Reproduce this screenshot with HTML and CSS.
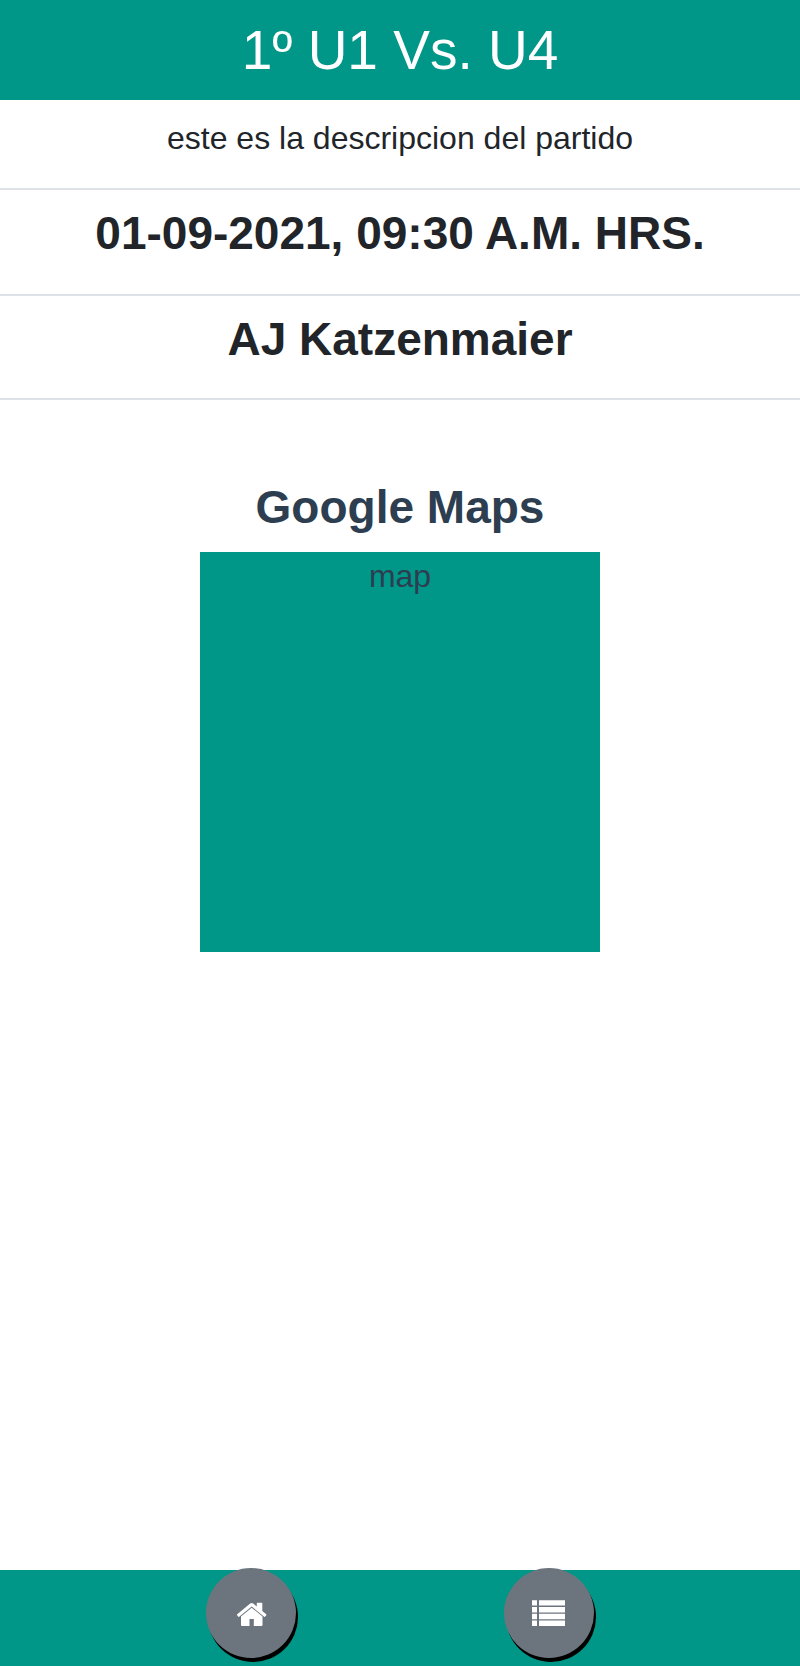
FILE: index.html
```html
<!DOCTYPE html>
<html lang="es">
<head>
<meta charset="utf-8">
<meta name="viewport" content="width=device-width, initial-scale=1">
<title>1º U1 Vs. U4</title>
<link rel="stylesheet" href="styles.css">
</head>
<body>
<header class="header"><h1 class="title">1º U1 Vs. U4</h1></header>
<main class="main">
  <section class="details">
    <p class="row description">este es la descripcion del partido</p>
    <h2 class="row heading">01-09-2021, 09:30 A.M. HRS.</h2>
    <h2 class="row heading">AJ Katzenmaier</h2>
  </section>
  <section class="location">
    <h2 class="heading">Google Maps</h2>
    <div class="map">map</div>
  </section>
</main>
<nav class="footer">
  <button class="round" type="button" aria-label="Inicio">
    <svg class="icon" viewBox="0 0 34 34" aria-hidden="true">
      <path d="M17.700 11.700 28.500 20.500v8.500q0 1-1 1h-7.700v-7h-4.300v7H8q-1 0-1-1v-8.500z"/>
      <path d="M3.300 18.300 16.200 7.500q1.500-1.200 3 0l3.600 3V7.300q0-.6.600-.6h4.300q.6 0 .6.600v7.800l3.900 3.200q.5.500.1 1l-1.100 1.300q-.5.500-1 .1L17.700 10.500 5.200 20.700q-.5.400-1-.1l-1.100-1.300q-.4-.5.200-1z"/>
    </svg>
  </button>
  <button class="round" type="button" aria-label="Lista">
    <svg class="icon" viewBox="0 0 34 34" aria-hidden="true">
      <path d="M0 4.200h5v5.400H0zM7 4.200h26v5.400H7zM0 11h5v5.400H0zM7 11h26v5.400H7zM0 17.800h5v5.400H0zM7 17.800h26v5.400H7zM0 24.600h5V30H0zM7 24.600h26V30H7z"/>
    </svg>
  </button>
</nav>
</body>
</html>
```

FILE: styles.css
```css
* {
  box-sizing: border-box;
}

body {
  margin: 0;
  min-height: 100vh;
  display: flex;
  flex-direction: column;
  background: #fff;
  color: #212529;
  font-family: "Liberation Sans", Arial, sans-serif;
  font-size: 32px;
  line-height: 48px;
  text-align: center;
}

.header {
  padding: 14px 16px;
  background: #009688;
  color: #fff;
}

.title {
  margin: 0;
  font-size: 55px;
  font-weight: 400;
  line-height: 72px;
}

.main {
  flex: 1;
}

.heading {
  margin: 0;
  font-size: 46px;
  font-weight: 700;
  line-height: 58px;
}

.row {
  margin: 0;
  padding: 14px 16px 32px;
  border-bottom: 2px solid #dee2e6;
}

.row:last-child {
  padding-bottom: 30px;
}

.description {
  padding-bottom: 26px;
}

.location {
  padding: 78px 16px 32px;
  color: #2c3e50;
}

.map {
  width: 100%;
  max-width: 400px;
  aspect-ratio: 1;
  margin: 16px auto 0;
  background: #009688;
}

.footer {
  display: flex;
  justify-content: center;
  gap: 26%;
  padding-bottom: 8px;
  background: #009688;
}

.round {
  display: flex;
  align-items: center;
  justify-content: center;
  width: 90px;
  height: 90px;
  margin-top: -2px;
  padding: 0;
  border: 0;
  border-radius: 50%;
  background: #6c757d;
  box-shadow: 2px 4px #000;
  color: #fff;
  cursor: pointer;
}

.icon {
  width: 34px;
  height: 34px;
  fill: currentColor;
}
```
